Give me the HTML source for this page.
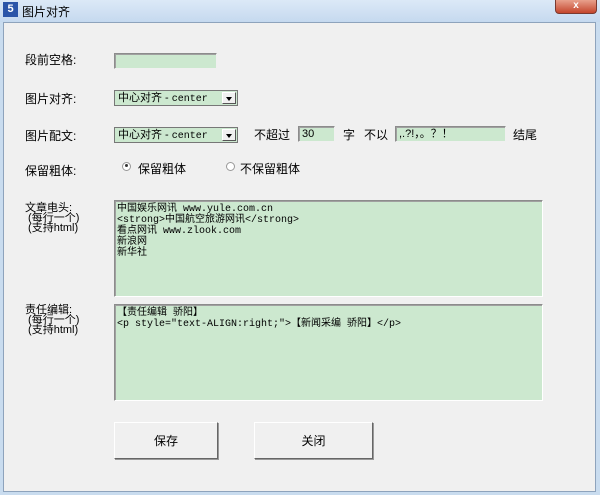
<!DOCTYPE html>
<html><head><meta charset="utf-8"><style>
*{margin:0;padding:0;box-sizing:border-box}
body{width:600px;height:495px;overflow:hidden;background:#c9dcef;font-family:"Liberation Sans","Noto Sans CJK SC",sans-serif;font-size:12px;color:#000;position:relative}
.title{position:absolute;left:0;top:0;width:600px;height:22px;background:linear-gradient(#dce9f7,#c5d9ef)}
.icon{position:absolute;left:3px;top:2px;width:15px;height:15px;background:#2b55a8;color:#fff;font-size:11px;font-weight:bold;text-align:center;line-height:15px}
.ttext{position:absolute;left:22px;top:3px;font-size:12px}
.close{position:absolute;left:555px;top:0;width:42px;height:14px;background:linear-gradient(#e8a08c,#c4452c);border:1px solid #7a3a30;border-top:none;border-radius:0 0 4px 4px;color:#fff;font-size:10px;text-align:center;line-height:12px;font-weight:bold}
.client{position:absolute;left:3px;top:22px;width:593px;height:470px;background:#f0f0f0;border:1px solid #8ea3bc}
.a{position:absolute;white-space:nowrap}
.in{position:absolute;background:#cce8cf;border:1px solid;border-color:#8c8c8c #f0f0f0 #f0f0f0 #8c8c8c;box-shadow:inset 1px 1px 0 #a0a0a0}
.sel{position:absolute;background:#cce8cf;border:1px solid #777;height:16px;font-size:11px;line-height:14px;padding-left:3px}
.sel .m{font-family:"Liberation Mono",monospace;font-size:10px}
.sel .b{position:absolute;right:1px;top:1px;width:14px;height:12px;background:#f0f0f0;border:1px solid;border-color:#fff #555 #555 #fff}
.sel .b:after{content:"";position:absolute;left:3px;top:4px;border:3px solid transparent;border-top:4px solid #000}
.ta{position:absolute;background:#cce8cf;border:1px solid;border-color:#8c8c8c #fff #fff #8c8c8c;box-shadow:inset 1px 1px 0 #a0a0a0;font-family:"Liberation Mono","Noto Sans CJK SC",monospace;font-size:10px;line-height:11px;padding:3px 2px;white-space:pre}
.lb{position:absolute;font-size:11px;line-height:10px;white-space:pre}
.btn{position:absolute;background:#f0f0f0;border:1px solid;border-color:#fff #666 #666 #fff;box-shadow:1px 1px 0 #999;text-align:center;line-height:36px;font-size:12px}
.rad{position:absolute;width:9px;height:9px;border-radius:50%;border:1px solid #999;background:#fff}
</style></head><body>
<div class="title"><div class="icon">5</div><div class="ttext">图片对齐</div><div class="close">x</div></div>
<div class="client"></div>
<div class="a" style="left:25px;top:51px">段前空格:</div>
<div class="in" style="left:114px;top:53px;width:103px;height:16px"></div>
<div class="a" style="left:25px;top:90px">图片对齐:</div>
<div class="sel" style="left:114px;top:90px;width:124px">中心对齐 - <span class="m">center</span><div class="b"></div></div>
<div class="a" style="left:25px;top:127px">图片配文:</div>
<div class="sel" style="left:114px;top:127px;width:124px">中心对齐 - <span class="m">center</span><div class="b"></div></div>
<div class="a" style="left:254px;top:126px">不超过</div>
<div class="in" style="left:298px;top:126px;width:37px;height:16px;font-size:11px;padding-left:3px;line-height:14px">30</div>
<div class="a" style="left:343px;top:126px">字</div>
<div class="a" style="left:364px;top:126px">不以</div>
<div class="in" style="left:395px;top:126px;width:111px;height:16px;font-size:11px;padding-left:3px;line-height:14px">,.?!，。？！</div>
<div class="a" style="left:513px;top:126px">结尾</div>
<div class="a" style="left:25px;top:162px">保留粗体:</div>
<div class="rad" style="left:122px;top:162px"></div><div class="a" style="left:125px;top:164px;width:3px;height:3px;background:#333;border-radius:50%"></div>
<div class="a" style="left:138px;top:160px">保留粗体</div>
<div class="rad" style="left:226px;top:162px"></div>
<div class="a" style="left:240px;top:160px">不保留粗体</div>
<div class="lb" style="left:25px;top:203px">文章电头:
 (每行一个)
 (支持html)</div>
<div class="ta" style="left:114px;top:200px;width:429px;height:97px">中国娱乐网讯 www.yule.com.cn
&lt;strong&gt;中国航空旅游网讯&lt;/strong&gt;
看点网讯 www.zlook.com
新浪网
新华社</div>
<div class="lb" style="left:25px;top:305px">责任编辑:
 (每行一个)
 (支持html)</div>
<div class="ta" style="left:114px;top:304px;width:429px;height:97px">【责任编辑 骄阳】
&lt;p style="text-ALIGN:right;"&gt;【新闻采编 骄阳】&lt;/p&gt;</div>
<div class="btn" style="left:114px;top:422px;width:104px;height:37px">保存</div>
<div class="btn" style="left:254px;top:422px;width:119px;height:37px">关闭</div>
</body></html>
